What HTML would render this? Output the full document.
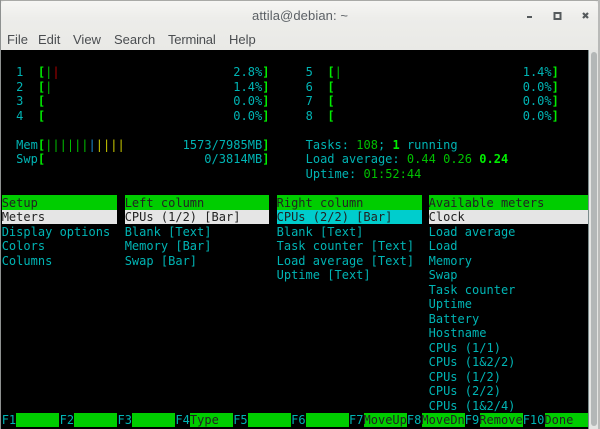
<!DOCTYPE html>
<html><head><meta charset="utf-8"><style>
html,body{margin:0;padding:0;background:#fff}
#w{position:relative;width:600px;height:429px;overflow:hidden;background:#fff}
#chrome{position:absolute;left:0;top:0;width:600px;height:429px;background:#e8e8e7;border-radius:4px 4px 0 0;}
#head{position:absolute;left:1px;top:1px;width:597px;height:49px;background:linear-gradient(#f6f6f4,#ededea 35%,#e9e9e6);border-radius:4px 4px 0 0}
#topl{position:absolute;left:0;top:0;width:600px;height:1px;background:#a9aaa7}
#leftl{position:absolute;left:0;top:0;width:1px;height:429px;background:#8e9190}
#rightl{position:absolute;left:598px;top:0;width:2px;height:429px;background:#b9bab8}
.ui{position:absolute;font:13px "Liberation Sans",sans-serif;color:#4a4d50;white-space:pre;filter:blur(.3px)}
#term{position:absolute;left:1px;top:50px;width:587px;height:379px;background:#000}
#sb{position:absolute;left:588px;top:50px;width:10px;height:379px;background:#e4e5e3;border-left:1px solid #7c8c8c;box-sizing:border-box}
#th{position:absolute;left:591px;top:52px;width:6px;height:374px;background:#b3b7b7;border-radius:3px}
.bar{position:absolute;height:14.5px}
.t{position:absolute;margin-top:.5px;font:12px/14.5px "DejaVu Sans Mono",monospace;letter-spacing:.011px;white-space:pre;color:#00b4b4;filter:blur(.3px)}
.g{color:#00c000}.G{color:#00ee00;font-weight:bold}.k{color:#222}.red{color:#b00000}.b{color:#1a8ad0}.y{color:#c8c800}
</style></head><body><div id="w">
<div id="chrome"></div><div id="head"></div><div id="topl"></div>
<div id="leftl"></div><div id="rightl"></div>
<div class="ui" style="left:252px;top:8px;color:#5b6065;letter-spacing:.1px">attila@debian: ~</div>
<div class="ui" style="left:7px;top:32px">File</div>
<div class="ui" style="left:38px;top:32px">Edit</div>
<div class="ui" style="left:73px;top:32px">View</div>
<div class="ui" style="left:114px;top:32px">Search</div>
<div class="ui" style="left:168px;top:32px;letter-spacing:-.2px">Terminal</div>
<div class="ui" style="left:229px;top:32px">Help</div>
<svg style="position:absolute;left:520px;top:6px" width="70" height="18" viewBox="0 0 70 18">
<rect x="7" y="10" width="5" height="2" fill="#555a5c"/>
<rect x="34.5" y="7" width="6" height="6" fill="none" stroke="#555a5c" stroke-width="2"/>
<path d="M63 7l5 5M68 7l-5 5" stroke="#555a5c" stroke-width="2.2" fill="none"/>
</svg>
<div id="term"></div>
<div id="sb"></div><div id="th"></div>
<div id="T" style="position:absolute;left:0;top:0;width:600px;height:429px">
<div class="bar" style="left:1.7px;top:195.2px;width:115.8px;background:#00cd00"></div>
<div class="bar" style="left:124.7px;top:195.2px;width:144.7px;background:#00cd00"></div>
<div class="bar" style="left:276.6px;top:195.2px;width:145.2px;background:#00cd00"></div>
<div class="bar" style="left:428.6px;top:195.2px;width:159.4px;background:#00cd00"></div>
<div class="bar" style="left:1.7px;top:209.7px;width:115.8px;background:#e5e5e5"></div>
<div class="bar" style="left:124.7px;top:209.7px;width:144.7px;background:#e5e5e5"></div>
<div class="bar" style="left:276.6px;top:209.7px;width:145.2px;background:#00cdcd"></div>
<div class="bar" style="left:428.6px;top:209.7px;width:159.4px;background:#e5e5e5"></div>
<div class="bar" style="left:16px;top:412.7px;width:43.2px;background:#00cd00"></div>
<div class="bar" style="left:74px;top:412.7px;width:43.2px;background:#00cd00"></div>
<div class="bar" style="left:132px;top:412.7px;width:43.2px;background:#00cd00"></div>
<div class="bar" style="left:190px;top:412.7px;width:43.2px;background:#00cd00"></div>
<div class="bar" style="left:248px;top:412.7px;width:43.2px;background:#00cd00"></div>
<div class="bar" style="left:306px;top:412.7px;width:43.2px;background:#00cd00"></div>
<div class="bar" style="left:363.5px;top:412.7px;width:43.7px;background:#00cd00"></div>
<div class="bar" style="left:421.5px;top:412.7px;width:43.7px;background:#00cd00"></div>
<div class="bar" style="left:479.5px;top:412.7px;width:43.2px;background:#00cd00"></div>
<div class="bar" style="left:544.5px;top:412.7px;width:43.5px;background:#00cd00"></div>

<div class="t" style="left:1.7px;top:64.7px">  1  <span class="G">[</span><span class="g">|</span><span class="red">|</span>                        2.8%<span class="G">]</span></div>
<div class="t" style="left:1.7px;top:79.2px">  2  <span class="G">[</span><span class="g">|</span>                         1.4%<span class="G">]</span></div>
<div class="t" style="left:1.7px;top:93.7px">  3  <span class="G">[</span>                          0.0%<span class="G">]</span></div>
<div class="t" style="left:1.7px;top:108.2px">  4  <span class="G">[</span>                          0.0%<span class="G">]</span></div>
<div class="t" style="left:305.6px;top:64.7px">5  <span class="G">[</span><span class="g">|</span>                         1.4%<span class="G">]</span></div>
<div class="t" style="left:305.6px;top:79.2px">6  <span class="G">[</span>                          0.0%<span class="G">]</span></div>
<div class="t" style="left:305.6px;top:93.7px">7  <span class="G">[</span>                          0.0%<span class="G">]</span></div>
<div class="t" style="left:305.6px;top:108.2px">8  <span class="G">[</span>                          0.0%<span class="G">]</span></div>

<div class="t" style="left:1.7px;top:137.2px">  Mem<span class="G">[</span><span class="g">||||||</span><span class="b">|</span><span class="y">||||</span>        1573/7985MB<span class="G">]</span></div>
<div class="t" style="left:1.7px;top:151.7px">  Swp<span class="G">[</span>                      0/3814MB<span class="G">]</span></div>
<div class="t" style="left:305.6px;top:137.2px">Tasks: <span class="g">108</span>; <span class="G">1</span> running</div>
<div class="t" style="left:305.6px;top:151.7px">Load average: <span class="g">0.44 0.26</span> <span class="G">0.24</span></div>
<div class="t" style="left:305.6px;top:166.2px">Uptime: <span class="g">01:52:44</span></div>

<div class="t k" style="left:1.7px;top:195.2px">Setup</div>
<div class="t k" style="left:124.7px;top:195.2px">Left column</div>
<div class="t k" style="left:276.6px;top:195.2px">Right column</div>
<div class="t k" style="left:428.6px;top:195.2px">Available meters</div>
<div class="t k" style="left:1.7px;top:209.7px">Meters</div>
<div class="t k" style="left:124.7px;top:209.7px">CPUs (1/2) [Bar]</div>
<div class="t k" style="left:276.6px;top:209.7px">CPUs (2/2) [Bar]</div>
<div class="t k" style="left:428.6px;top:209.7px">Clock</div>

<div class="t" style="left:1.7px;top:224.2px">Display options</div>
<div class="t" style="left:1.7px;top:238.7px">Colors</div>
<div class="t" style="left:1.7px;top:253.2px">Columns</div>
<div class="t" style="left:124.7px;top:224.2px">Blank [Text]</div>
<div class="t" style="left:124.7px;top:238.7px">Memory [Bar]</div>
<div class="t" style="left:124.7px;top:253.2px">Swap [Bar]</div>
<div class="t" style="left:276.6px;top:224.2px">Blank [Text]</div>
<div class="t" style="left:276.6px;top:238.7px">Task counter [Text]</div>
<div class="t" style="left:276.6px;top:253.2px">Load average [Text]</div>
<div class="t" style="left:276.6px;top:267.7px">Uptime [Text]</div>
<div class="t" style="left:428.6px;top:224.2px">Load average</div>
<div class="t" style="left:428.6px;top:238.7px">Load</div>
<div class="t" style="left:428.6px;top:253.2px">Memory</div>
<div class="t" style="left:428.6px;top:267.7px">Swap</div>
<div class="t" style="left:428.6px;top:282.2px">Task counter</div>
<div class="t" style="left:428.6px;top:296.7px">Uptime</div>
<div class="t" style="left:428.6px;top:311.2px">Battery</div>
<div class="t" style="left:428.6px;top:325.7px">Hostname</div>
<div class="t" style="left:428.6px;top:340.2px">CPUs (1/1)</div>
<div class="t" style="left:428.6px;top:354.7px">CPUs (1&amp;2/2)</div>
<div class="t" style="left:428.6px;top:369.2px">CPUs (1/2)</div>
<div class="t" style="left:428.6px;top:383.7px">CPUs (2/2)</div>
<div class="t" style="left:428.6px;top:398.2px">CPUs (1&amp;2/4)</div>

<div class="t" style="left:1.7px;top:412.7px">F1</div>
<div class="t" style="left:59.6px;top:412.7px">F2</div>
<div class="t" style="left:117.5px;top:412.7px">F3</div>
<div class="t" style="left:175.4px;top:412.7px">F4<span class="k">Type</span></div>
<div class="t" style="left:233.2px;top:412.7px">F5</div>
<div class="t" style="left:291.1px;top:412.7px">F6</div>
<div class="t" style="left:349px;top:412.7px">F7<span class="k">MoveUp</span></div>
<div class="t" style="left:406.9px;top:412.7px">F8<span class="k">MoveDn</span></div>
<div class="t" style="left:464.8px;top:412.7px">F9<span class="k">Remove</span></div>
<div class="t" style="left:522.7px;top:412.7px">F10<span class="k">Done</span></div>
</div>
</div></body></html>
